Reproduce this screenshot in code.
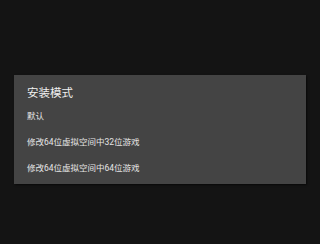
export default function App() {
  const options = ["默认", "修改64位虚拟空间中32位游戏", "修改64位虚拟空间中64位游戏"];

  return (
    <div
      className="h-[244px] w-[320px] bg-[#141414] px-[14px] pt-[75px]"
      style={{ fontFamily: 'Roboto, "Noto Sans CJK SC", sans-serif' }}
    >
      <div className="h-[109px] w-[292px] bg-[#444444] px-[13px] pt-[10px] shadow-[1px_1px_2px_rgba(0,0,0,0.6)]">
        <div className="text-[11.5px] leading-[17px] text-[#f0f0f0]">安装模式</div>
        <div className="mt-[1px]">
          {options.map((o) => (
            <div key={o} className="h-[26px] text-[8.5px] leading-[26px] text-[#e6e6e6]">
              {o}
            </div>
          ))}
        </div>
      </div>
    </div>
  );
}
